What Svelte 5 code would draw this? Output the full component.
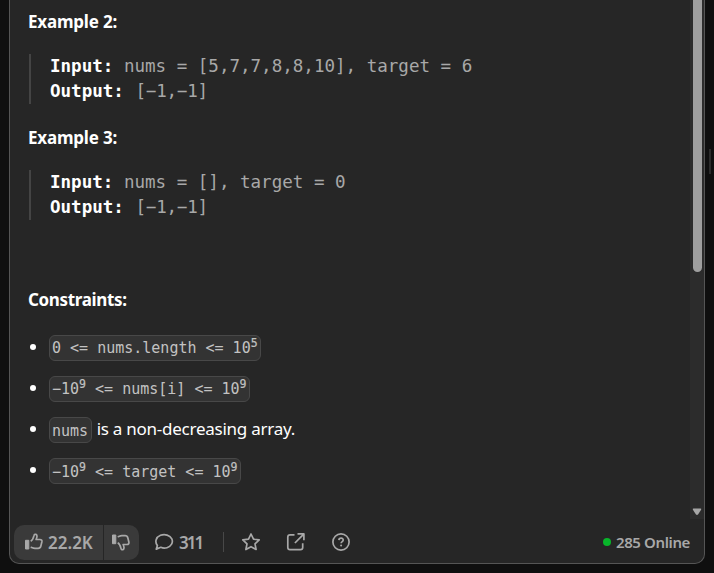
<script>
  const examples = [
    { title: 'Example 2:', input: 'nums = [5,7,7,8,8,10], target = 6', output: '[−1,−1]' },
    { title: 'Example 3:', input: 'nums = [], target = 0', output: '[−1,−1]' }
  ];
  const constraints = [
    { code: [['0 <= nums.length <= 10', '5']], text: '' },
    { code: [['−10', '9'], [' <= nums[i] <= 10', '9']], text: '' },
    { code: [['nums', '']], text: 'is a non-decreasing array.' },
    { code: [['−10', '9'], [' <= target <= 10', '9']], text: '' }
  ];
</script>

<div class="page">
  <main class="panel">
    <div class="viewport">
      <article>
        {#each examples as example}
          <h2><span>{example.title}</span></h2>
          <div class="example"><div><b>Input:</b> {example.input}</div><div><b>Output:</b> <span class="output">{example.output}</span></div></div>
        {/each}
        <h2 class="constraints"><span>Constraints:</span></h2>
        <ul>
          {#each constraints as item}
            <li>
              <i></i>
              <code>{#each item.code as [base, power]}<span>{base}</span>{#if power}<sup>{power}</sup>{/if}{/each}</code>
              {#if item.text}<span class="sentence">{item.text}</span>{/if}
            </li>
          {/each}
        </ul>
      </article>
      <div class="track">
        <div class="thumb"></div>
        <svg width="10" height="8" viewBox="0 0 10 8"><path d="M1.5 .5h7q1.200 0 .6 1.200L6.200 6.200q-1.200 1.400-2.400 0L.9 1.700Q.3.500 1.500.500Z" fill="#a6a6a6" /></svg>
      </div>
    </div>
    <footer>
      <div class="votes">
        <button class="up" aria-label="Like">
          <svg width="20" height="20" viewBox="0 0 20 20"><path d="M1.500 8.300h3.300v8.700H1.500Z" fill="currentColor" stroke="currentColor" stroke-width="1" stroke-linejoin="round" /><path d="M6.700 9.200c2.100-1.100 2.700-3.200 3.200-5.300.3-1.400 1-1.900 2-1.500 1.600.7 1.300 2.700.2 5.100h3.800c1.500 0 2.300.9 2 2.300l-1.100 4.400c-.4 1.500-1.300 2.100-2.700 2.100H11c-1.700 0-2.700-.6-4.300-1.200" /></svg>
          <span>22.2K</span>
        </button>
        <button class="down" aria-label="Dislike">
          <svg width="20" height="20" viewBox="0 0 20 20"><path d="M1.500 3h3.300v8.700H1.500Z" fill="currentColor" stroke="currentColor" stroke-width="1" stroke-linejoin="round" /><path d="M6.700 10.800c2.100 1.100 2.700 3.200 3.200 5.300.3 1.400 1 1.900 2 1.500 1.600-.7 1.300-2.700.2-5.100h3.800c1.500 0 2.300-.9 2-2.300l-1.100-4.400c-.4-1.500-1.300-2.100-2.700-2.100H11c-1.700 0-2.700.6-4.300 1.200" /></svg>
        </button>
      </div>
      <div class="comments">
        <svg width="20" height="20" viewBox="0 0 20 20"><path d="M2.300 17.100 3.400 13.600C.5 10 2 5.100 6.500 3.300c4.300-1.700 9.600-.1 11.300 3.500 1.700 3.700-.7 7.700-4.800 8.900-2.200.6-4.400.4-6.200-.4Z" /></svg>
        <span>311</span>
      </div>
      <div class="divider"></div>
      <div class="actions">
        <svg width="20" height="20" viewBox="0 0 20 20"><path d="m10 2 2.500 5.200 5.700.7-4.200 3.900 1.100 5.700L10 14.700l-5.100 2.800L6 11.800 1.800 7.900l5.700-.7Z" /></svg>
        <svg width="20" height="20" viewBox="0 0 20 20"><path d="M8.500 2.800H4q-2.200 0-2.200 2.200v10.500q0 2.200 2.200 2.200h10.500q2.200 0 2.200-2.200v-4.300M11.500 1.900h6.400v6.300M17.700 2.100 8.900 11" /></svg>
        <svg width="20" height="20" viewBox="0 0 20 20"><circle cx="10" cy="10" r="8.100" /><path d="M7.900 8.100C8 5.500 12.300 5.500 12.200 8c0 1.600-2.100 1.600-2.100 3.300" /><circle cx="10.100" cy="13.500" r="1" fill="currentColor" stroke="none" /></svg>
      </div>
      <div class="online"><i></i><span>285 Online</span></div>
    </footer>
  </main>
  <div class="grip"></div>
</div>

<style>
  :global(body) { background: #0f0f0f; overflow: hidden; }
  .page { width: 714px; height: 573px; box-sizing: border-box; padding-left: 9px; display: flex; background: #0f0f0f; font-family: "Noto Sans", "Open Sans", sans-serif; color: #fff; }
  .panel { width: 696px; height: 564px; box-sizing: border-box; border: 1px solid #555; border-top: 0; border-radius: 0 0 10px 10px; background: #262626; overflow: hidden; display: flex; flex-direction: column; }
  .viewport { height: 519px; display: flex; }
  article { width: 680px; box-sizing: border-box; padding-left: 19px; }
  h2 { margin: 0; height: 24px; padding-top: 10px; font-size: 17px; line-height: 24px; font-weight: 700; letter-spacing: -.2px; white-space: nowrap; }
  h2 span { margin-left: -1px; }
  .example { height: 50px; margin: 20px 0; border-left: 2px solid #444; padding-left: 19px; font: 17.550px/25px "DejaVu Sans Mono", monospace; color: #a8a8a8; white-space: pre; }
  .example + h2 { padding-top: 2px; }
  .example b { color: #fff; }
  .output { margin-left: 1px; letter-spacing: -.2px; }
  h2.constraints { margin-top: 66px; letter-spacing: -.35px; }
  ul { list-style: none; margin: 23px 0 0; padding: 0; }
  li { height: 26px; margin-bottom: 15px; display: flex; align-items: center; }
  li > i { width: 6px; height: 6px; border-radius: 50%; background: #fff; margin: -2px 13px 0 1px; }
  code { height: 26px; box-sizing: border-box; border: 1px solid #484848; border-radius: 6px; background: #333; color: #c2c2c2; padding: 0 2.500px 0 2px; font: 15px/25px "DejaVu Sans Mono", monospace; white-space: pre; }
  li:nth-child(n + 3) code { line-height: 26px; }
  sup { font-size: 11.500px; line-height: 0; vertical-align: baseline; position: relative; top: -6px; -webkit-text-stroke: .2px; }
  .sentence { font-size: 17px; line-height: 24px; letter-spacing: -.25px; margin: -2px 0 0 5px; }
  .track { width: 14px; background: #2c2c2c; display: flex; flex-direction: column; align-items: center; justify-content: space-between; }
  .thumb { width: 9px; height: 272px; border-radius: 0 0 5px 5px; background: #9f9f9f; }
  .track svg { margin-bottom: 3px; }
  footer { height: 44px; padding: 2px 14px 0 4px; box-sizing: border-box; display: flex; align-items: center; color: #a8a8a8; font-size: 17px; font-weight: 600; }
  footer svg { fill: none; stroke: currentColor; stroke-width: 1.700; stroke-linejoin: round; flex: none; }
  .votes { display: flex; gap: 1px; height: 35px; border-radius: 10px; overflow: hidden; }
  button { margin: 0; border: 0; background: #3a3a3a; color: inherit; font: inherit; display: flex; align-items: center; padding: 0 10px; }
  .up { width: 89px; gap: 4px; }
  .down { width: 35px; padding: 0 7px; }
  .up span { letter-spacing: 0; }
  .comments { display: flex; align-items: center; gap: 5px; margin-left: 15px; width: 69px; letter-spacing: -2px; }
  .divider { width: 1px; height: 20px; background: #484848; }
  .actions { display: flex; gap: 25px; margin-left: 17px; }
  .online { display: flex; align-items: center; gap: 5px; margin-left: auto; font-size: 15px; letter-spacing: -.38px; }
  .online i { width: 8px; height: 8px; background: #08b52a; border-radius: 50%; }
  .grip { width: 2px; height: 25px; margin: 149px 0 0 4px; background: #2c2c2c; }
</style>
